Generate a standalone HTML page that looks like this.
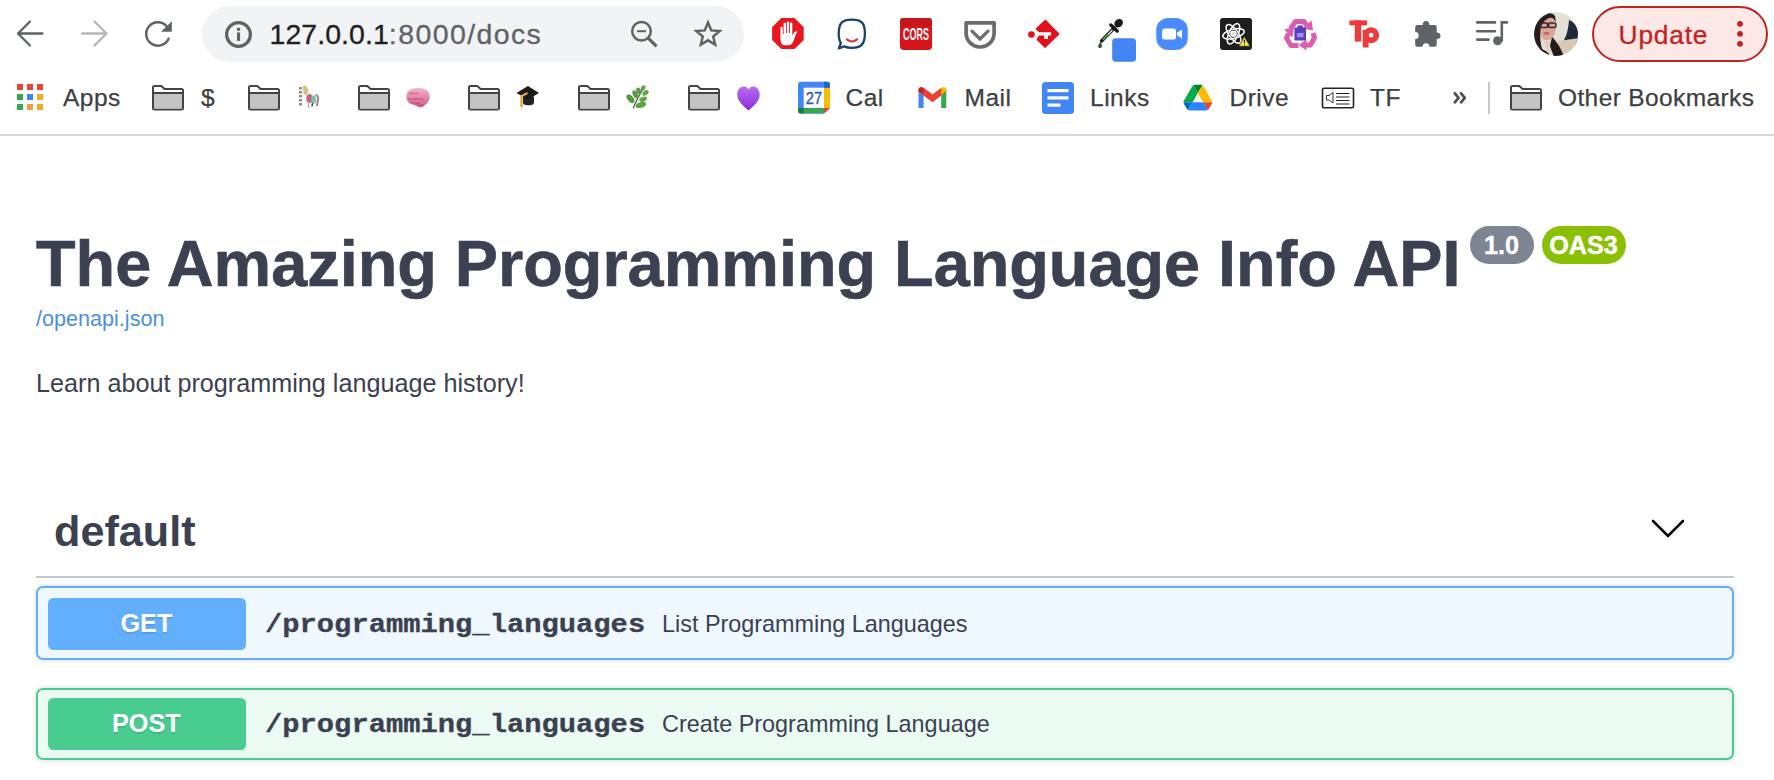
<!DOCTYPE html>
<html>
<head>
<meta charset="utf-8">
<style>
html,body{margin:0;padding:0;}
body{width:1774px;height:780px;overflow:hidden;background:#fff;position:relative;font-family:"Liberation Sans",sans-serif;}
.a{position:absolute;white-space:nowrap;line-height:1;}
svg.a{overflow:visible;}
.bm{font-size:24.5px;color:#3c4043;letter-spacing:0.5px;-webkit-text-stroke:0.25px #3c4043}
</style>
</head>
<body>
<!-- ===== Browser toolbar ===== -->
<svg class="a" style="left:0;top:0" width="1774" height="136" viewBox="0 0 1774 136">
  <!-- back -->
  <g fill="none" stroke="#5f6368" stroke-width="2.3" stroke-linecap="round" stroke-linejoin="round">
    <path d="M42.5 33.5H18M30 21.5L18 33.5L30 45.5"/>
  </g>
  <!-- forward -->
  <g fill="none" stroke="#b4b6b9" stroke-width="2.3" stroke-linecap="round" stroke-linejoin="round">
    <path d="M82 33.5H106.5M94.5 21.5L106.5 33.5L94.5 45.5"/>
  </g>
  <!-- reload -->
  <path d="M166.5 26 A11.7 11.7 0 1 0 168.6 38.7" fill="none" stroke="#5f6368" stroke-width="2.5" stroke-linecap="round"/>
  <path d="M161 31.7H171.8V21.2Z" fill="#5f6368"/>
  <!-- omnibox -->
  <rect x="202" y="6" width="542" height="56" rx="28" fill="#f1f3f4"/>
  <!-- info -->
  <circle cx="238.5" cy="34.5" r="11.9" fill="none" stroke="#5f6368" stroke-width="3.2"/>
  <rect x="237" y="27.8" width="3.1" height="3" fill="#5f6368"/>
  <rect x="237" y="32.5" width="3.1" height="8.4" fill="#5f6368"/>
  <!-- zoom out -->
  <circle cx="641.5" cy="31.2" r="9.3" fill="none" stroke="#5f6368" stroke-width="2.5"/>
  <path d="M637 31.2H646" stroke="#5f6368" stroke-width="2"/>
  <path d="M648.5 38.3L656.5 46.3" stroke="#5f6368" stroke-width="3.2"/>
  <!-- star -->
  <path d="M708 22.5L711.6 31.2L721 31.9L713.8 38L716 47.1L708 42.2L700 47.1L702.2 38L695 31.9L704.4 31.2Z" fill="none" stroke="#5f6368" stroke-width="2.75" stroke-linejoin="miter" transform="translate(708 33.3) scale(0.9) translate(-708 -34.4)"/>

  <!-- ext 1: adblock -->
  <path d="M781.3 18.1H794.5L803.7 27.3V39.9L794.5 49.1H781.3L772.1 39.9V27.3Z" fill="#e8161e"/>
  <path d="M784.5 45.2C781.8 45.2 780.4 42 780.4 38.5V27.5C780.4 26.6 782.7 26.6 782.7 27.5V34H783.6V23.6C783.6 22.6 785.9 22.6 785.9 23.6V33H786.8V22.1C786.8 21.2 789.1 21.2 789.1 22.1V33H790V23.2C790 22.3 792.3 22.3 792.3 23.2V35.5C793.5 33 795.3 31 797.3 31.4C795.8 34 794.6 38 793.5 41C792.4 44 790.5 45.2 788.5 45.2Z" fill="#fff"/>
  <!-- ext 2: chat bubble -->
  <path d="M851.8 19.6C861 19.6 864.9 22.5 864.9 33.5C864.9 44.8 860.5 47.9 851.8 47.9C848.5 47.9 846.2 47.4 844.2 46.4L838.8 48.3L840.9 43.2C839.2 40.6 838.7 37.5 838.7 33.5C838.7 22.5 842.8 19.6 851.8 19.6Z" fill="none" stroke="#1d426d" stroke-width="2.3" stroke-linejoin="round"/>
  <path d="M846.8 39.4Q852 43.5 857.2 39.4" fill="none" stroke="#d7373f" stroke-width="2" stroke-linecap="round"/>
  <!-- ext 3: CORS -->
  <rect x="900" y="18" width="32" height="32" rx="4" fill="#d8141b"/>
  <rect x="900" y="18" width="32" height="8" rx="3" fill="#c5161c"/>
  <text x="916" y="39.6" text-anchor="middle" font-family="Liberation Sans" font-weight="bold" font-size="16.5" fill="#fff" textLength="26" lengthAdjust="spacingAndGlyphs">CORS</text>
  <!-- ext 4: pocket -->
  <path d="M966.1 22.8H994.1V33A14 14 0 0 1 966.1 33Z" fill="none" stroke="#6b6b6b" stroke-width="3.7" stroke-linejoin="round"/>
  <path d="M972 31.2L980 39L988 31.2" fill="none" stroke="#6b6b6b" stroke-width="3.2" stroke-linecap="round" stroke-linejoin="round"/>
  <!-- ext 5: red diamond key -->
  <path d="M1045.5 20.3L1058.8 34L1045 47.3L1037.2 39.6L1039.2 36H1043.7V39.6H1048.6V36H1051.7V31.7H1039.2L1036.3 28.8Z" fill="#e3111b" stroke="#e3111b" stroke-width="1.2" stroke-linejoin="round"/>
  <circle cx="1031.4" cy="34.5" r="3.3" fill="#e3111b"/>
  <!-- ext 6: eyedropper + blue square -->
  <rect x="1112.2" y="38.2" width="23.8" height="23.6" rx="3.5" fill="#4385f2"/>
  <path d="M1114 28.3L1101.5 41" stroke="#1f2a1f" stroke-width="3.6" stroke-linecap="round"/>
  <path d="M1112.3 30.2L1103 39.6" stroke="#e4ece4" stroke-width="1.3"/>
  <path d="M1108.2 34.4L1103 39.6" stroke="#4f9a3a" stroke-width="1.5"/>
  <path d="M1110.8 25L1117.2 31" stroke="#111" stroke-width="3.3" stroke-linecap="round"/>
  <ellipse cx="1118.6" cy="23.2" rx="4.7" ry="3.9" transform="rotate(-45 1118.6 23.2)" fill="#1a1a1a"/>
  <path d="M1100.4 42.2C1099 44 1097.8 45.5 1098.3 47C1098.8 48.4 1101.2 48.4 1101.8 47C1102.2 45.5 1101.5 43.5 1100.4 42.2Z" fill="#344d36"/>
  <!-- ext 7: zoom -->
  <rect x="1156.2" y="18" width="31.6" height="32" rx="12" fill="#4a8cff"/>
  <rect x="1162.1" y="28.4" width="13.9" height="11.2" rx="2.5" fill="#fff"/>
  <path d="M1177 32.8L1182 29.5V38.6L1177 35.3Z" fill="#fff"/>
  <!-- ext 8: react -->
  <rect x="1220" y="18" width="32" height="32" rx="3" fill="#1e1e1e"/>
  <g fill="none" stroke="#fff" stroke-width="1.5">
    <ellipse cx="1233.5" cy="33.8" rx="11" ry="4.6" transform="rotate(-15 1233.5 33.8)"/>
    <ellipse cx="1233.5" cy="33.8" rx="11" ry="4.6" transform="rotate(55 1233.5 33.8)"/>
    <ellipse cx="1233.5" cy="33.8" rx="11" ry="4.6" transform="rotate(115 1233.5 33.8)"/>
  </g>
  <circle cx="1233.5" cy="33.8" r="2.6" fill="#ddd" stroke="#fff" stroke-width="1.4"/>
  <path d="M1244.4 36.5L1250 46.3H1238.8Z" fill="#f4e64a" stroke="#1e1e1e" stroke-width="0.6"/>
  <path d="M1244.4 39.8V43.3M1244.4 44.3V45.2" stroke="#1e1e1e" stroke-width="1.1"/>
  <!-- ext 9: recycle -->
  <g fill="none" stroke="#dc5db0" stroke-width="5" stroke-linejoin="round">
    <path d="M1290.5 29L1295.5 21.5H1304L1306.5 25.5"/>
    <path d="M1313 33L1314.5 37.5L1310.5 45H1305"/>
    <path d="M1298.5 45.5H1291L1286.5 38L1288.5 33.5"/>
  </g>
  <g fill="#dc5db0">
    <path d="M1302.5 28.5L1313 30.5L1311.5 20.5Z"/>
    <path d="M1306.5 39.5V50.5L1298.5 45Z"/>
    <path d="M1284 29.5L1294 27.5L1292.5 37.5Z"/>
  </g>
  <rect x="1294.4" y="27.5" width="11.6" height="13" rx="1" fill="#5b3ec2"/>
  <rect x="1297.5" y="25.5" width="5.4" height="2.5" fill="#5b3ec2"/>
  <rect x="1297" y="33" width="6.5" height="4.2" fill="#a58be8"/>
  <!-- ext 10: Tp -->
  <rect x="1349.4" y="20.4" width="17.7" height="5" fill="#ee3a3d"/>
  <rect x="1354.8" y="20.4" width="6.4" height="21.2" fill="#ee3a3d"/>
  <circle cx="1371.1" cy="35.2" r="5.2" fill="none" stroke="#ee3a3d" stroke-width="5.6"/>
  <rect x="1362.7" y="30" width="5.9" height="17.5" fill="#ee3a3d"/>
  <!-- ext 11: puzzle -->
  <path d="M1417.2 25H1422.8A3.3 3.3 0 1 1 1429.2 25H1434.7Q1436.7 25 1436.7 27V32.5A3.3 3.3 0 1 1 1436.7 39V44.8Q1436.7 46.8 1434.7 46.8H1429.5A3.5 3.5 0 0 0 1422.5 46.8H1417.2Q1415.2 46.8 1415.2 44.8V39A3.5 3.5 0 0 0 1415.2 32V27Q1415.2 25 1417.2 25Z" fill="#5f6368"/>
  <!-- ext 12: media queue -->
  <g stroke="#5f6368" stroke-width="2.6" stroke-linecap="round">
    <path d="M1477.2 22.4H1495M1477.2 31.2H1495M1477.2 39.6H1488.5"/>
    <path d="M1501.8 40.5V22.4H1507" fill="none"/>
  </g>
  <circle cx="1497.6" cy="40.8" r="4.5" fill="#5f6368"/>
  <!-- avatar -->
  <defs>
    <clipPath id="av"><circle cx="1556" cy="34" r="22"/></clipPath>
  </defs>
  <g clip-path="url(#av)">
    <rect x="1534" y="12" width="45" height="45" fill="#e3e1d6"/>
    <path d="M1569 20C1575 22 1579 30 1579 38V45L1560 44C1565 41 1568 33 1569 20Z" fill="#1f2738"/>
    <path d="M1558 41L1579 38V50L1566 56L1556 50Z" fill="#d9c8b6"/>
    <ellipse cx="1547.5" cy="28.8" rx="8.3" ry="11.5" transform="rotate(6 1547.5 28.8)" fill="#d8a999"/>
    <path d="M1534 57V34C1534 22 1540 13.5 1548 13.2C1552 13 1555 14.5 1555.5 17.5C1549 16.5 1542 20 1540.5 30C1539.5 40 1541 50 1546 57Z" fill="#2a1c1b"/>
    <path d="M1548 13.5C1553 14 1556 17 1556 22L1553 18.5C1551 17.5 1548.5 17 1546 17.5Z" fill="#2a1c1b"/>
    <rect x="1540.5" y="23" width="7" height="4.4" rx="1" fill="none" stroke="#3a2730" stroke-width="1.5"/>
    <rect x="1548.8" y="23" width="7" height="4.4" rx="1" fill="none" stroke="#3a2730" stroke-width="1.5"/>
    <ellipse cx="1546.5" cy="33.4" rx="3.2" ry="1.4" fill="#c5646c"/>
    <path d="M1543 40C1547 42 1551 41 1554 38L1557 50L1548 53Z" fill="#e4d0c3"/>
    <path d="M1552 37C1557 42 1561 48 1564 57H1554L1550 46Z" fill="#231a1a"/>
    <path d="M1538 50C1542 48 1547 50 1551 57H1534Z" fill="#1f1818"/>
  </g>
  <!-- update button -->
  <rect x="1593" y="7" width="174" height="54" rx="27" fill="#fce8e6" stroke="#c5221f" stroke-width="2"/>
  <circle cx="1740" cy="23.8" r="2.9" fill="#c5221f"/>
  <circle cx="1740" cy="33.8" r="2.9" fill="#c5221f"/>
  <circle cx="1740" cy="43.8" r="2.9" fill="#c5221f"/>

  <!-- ===== Bookmarks bar ===== -->
  <!-- apps grid -->
  <g>
    <rect x="17" y="84" width="6" height="6" fill="#ea4335"/><rect x="27" y="84" width="6" height="6" fill="#ea4335"/><rect x="37" y="84" width="6" height="6" fill="#ea4335"/>
    <rect x="17" y="94" width="6" height="6" fill="#34a853"/><rect x="27" y="94" width="6" height="6" fill="#4285f4"/><rect x="37" y="94" width="6" height="6" fill="#f9a825"/>
    <rect x="17" y="104" width="6" height="6" fill="#34a853"/><rect x="27" y="104" width="6" height="6" fill="#f29e3b"/><rect x="37" y="104" width="6" height="6" fill="#f9a825"/>
  </g>
  <defs>
    <g id="fold">
      <path d="M1 2.5Q1 1 2.5 1H9.3L12.6 4H29.5Q31 4 31 5.5V23Q31 24.5 29.5 24.5H2.5Q1 24.5 1 23Z" fill="#fff" stroke="#444" stroke-width="2" stroke-linejoin="round"/>
      <rect x="2" y="9" width="28" height="14.5" fill="#c4c4c4"/>
      <path d="M1 8H31" stroke="#444" stroke-width="2"/>
    </g>
  </defs>
  <use href="#fold" x="152" y="85"/>
  <use href="#fold" x="248" y="85"/>
  <use href="#fold" x="358" y="85"/>
  <use href="#fold" x="468" y="85"/>
  <use href="#fold" x="578" y="85"/>
  <use href="#fold" x="688" y="85"/>
  <use href="#fold" x="1510" y="85"/>
  <!-- carousel horse emoji approx -->
  <g>
    <path d="M300.5 87V106" stroke="#7a6a5c" stroke-width="3.2" stroke-dasharray="2.5 1.5" opacity="0.75"/>
    <path d="M303 86L306 85.5L308.5 90L307 95L303.5 94Z" fill="#c9b766" opacity="0.85"/>
    <ellipse cx="309.5" cy="98.5" rx="3.2" ry="4.6" fill="#d45f7c"/>
    <ellipse cx="313.6" cy="99.5" rx="2.4" ry="4.2" fill="#73c6b2"/>
    <path d="M315.5 94.5C318.5 95.5 318.5 99 317.5 101.5L317 106" fill="none" stroke="#8f6f66" stroke-width="2.2" opacity="0.8"/>
    <path d="M308.5 101V108" stroke="#b3a39a" stroke-width="1.2"/>
    <path d="M312.5 103L312 106.5" stroke="#3a4a40" stroke-width="1.6"/>
  </g>
  <!-- brain -->
  <defs><linearGradient id="brg" x1="0" y1="0" x2="0" y2="1"><stop offset="0" stop-color="#f2b3c8"/><stop offset="1" stop-color="#d55c86"/></linearGradient></defs>
  <g>
    <path d="M406.5 97C406 91 411 88 418 88C425 88 430 91 429.8 97C429.5 101 427 104 424 105.5C423 107.5 420 108 417.5 106.5C415 105.5 413 104.5 411 104C408 103 406.5 100 406.5 97Z" fill="url(#brg)"/>
    <path d="M407.5 99C410 98 412 100 415 99C418 98 421 100 424 99M411 103C414 102 417 104 420 103M419 104.5C421 106 423 105 425 104M409 94C412 92.5 415 94 418 93" fill="none" stroke="#a8405f" stroke-width="0.9" opacity="0.8"/>
  </g>
  <!-- graduation cap -->
  <g>
    <path d="M523 96.5H534V102.5C534 104.5 531 105.3 528.5 105.3C526 105.3 523 104.5 523 102.5Z" fill="#222"/>
    <path d="M516.5 93L528 86.1L539 93.1L528 99.6Z" fill="#1a1a1a"/>
    <path d="M527.5 93L521.5 96V107" fill="none" stroke="#e0a52e" stroke-width="2.2" stroke-linejoin="round"/>
    <path d="M520 104.5L521.5 109L523.2 104.5Z" fill="#e8b23a"/>
  </g>
  <!-- herb -->
  <g>
    <path d="M633.1 108.3C636 101 640 94 644.4 86.1" fill="none" stroke="#3f6b34" stroke-width="1.2"/>
    <ellipse cx="630.5" cy="98.7" rx="5" ry="2.9" transform="rotate(50 630.5 98.7)" fill="#4f9a3a"/>
    <ellipse cx="640.9" cy="105" rx="5.5" ry="2.8" transform="rotate(-15 640.9 105)" fill="#5aa340"/>
    <ellipse cx="635.5" cy="94.4" rx="4.5" ry="2.5" transform="rotate(60 635.5 94.4)" fill="#5b9a48"/>
    <ellipse cx="643.1" cy="99.2" rx="4" ry="2.4" transform="rotate(-20 643.1 99.2)" fill="#5fa845"/>
    <ellipse cx="638.7" cy="90.9" rx="3.5" ry="2.2" transform="rotate(65 638.7 90.9)" fill="#5b9a48"/>
    <ellipse cx="645.5" cy="92.9" rx="3.5" ry="2.2" transform="rotate(-35 645.5 92.9)" fill="#5fa845"/>
    <ellipse cx="643.1" cy="88.1" rx="3" ry="2" transform="rotate(-60 643.1 88.1)" fill="#6a9a58"/>
  </g>
  <!-- purple heart -->
  <defs><linearGradient id="hg" x1="0" y1="0" x2="0" y2="1"><stop offset="0" stop-color="#b76cf0"/><stop offset="1" stop-color="#8b2fd9"/></linearGradient></defs>
  <path d="M748.5 110.5C744 106.5 737.3 101.5 737.3 94.5C737.3 89.5 740.5 86.5 743.7 86.5C746 86.5 747.6 87.8 748.5 89.5C749.4 87.8 751 86.5 753.3 86.5C756.5 86.5 759.7 89.5 759.7 94.5C759.7 101.5 753 106.5 748.5 110.5Z" fill="url(#hg)"/>
  <!-- calendar -->
  <g>
    <path d="M801 81.8H827Q830 81.8 830 84.8V108L824 113.6H801Q798 113.6 798 110.6V84.8Q798 81.8 801 81.8Z" fill="#4285f4"/>
    <rect x="803.7" y="87.7" width="20.3" height="20.3" fill="#fff"/>
    <path d="M824 87.7H830V108H824Z" fill="#fbbc04"/>
    <path d="M798 108H824V113.6H801Q798 113.6 798 110.6Z" fill="#34a853"/>
    <path d="M824 108H830L824 113.6Z" fill="#ea4335"/>
    <path d="M824 81.8H827Q830 81.8 830 84.8V87.7H824Z" fill="#1967d2"/>
    <path d="M798 108H803.7V113.6H801Q798 113.6 798 110.6Z" fill="#188038"/>
    <text x="805.8" y="103.6" font-family="Liberation Sans" font-size="16.5" fill="#2f5fb8" stroke="#2f5fb8" stroke-width="0.4" textLength="16.2" lengthAdjust="spacingAndGlyphs">27</text>
  </g>
  <!-- gmail -->
  <g>
    <path d="M918.5 89.5V108H923.6V95.5Z" fill="#4285f4"/>
    <path d="M941.2 95.5V108H946.3V89.5Z" fill="#34a853"/>
    <path d="M918.5 89.5L932.4 100L946.3 89.5V91.5L932.4 102L918.5 91.5Z" fill="#ea4335"/>
    <path d="M918.5 90C918.5 87 921.5 86.2 923.6 88L932.4 94.5V101L918.5 91Z" fill="#c5221f"/>
    <path d="M946.3 90C946.3 87 943.3 86.2 941.2 88L932.4 94.5V101L946.3 91Z" fill="#fbbc04"/>
    <path d="M923.6 88L932.4 94.5L941.2 88L941.2 95.5L932.4 102L923.6 95.5Z" fill="#ea4335"/>
  </g>
  <!-- docs/links -->
  <g>
    <rect x="1042" y="82" width="32" height="32" rx="3.5" fill="#4285f4"/>
    <rect x="1047.5" y="89" width="21" height="3.2" fill="#fff"/>
    <rect x="1047.5" y="96.3" width="21" height="3.2" fill="#fff"/>
    <rect x="1047.5" y="103.5" width="13" height="3.2" fill="#fff"/>
  </g>
  <!-- drive -->
  <g transform="translate(1183.5 84.8) scale(0.329)">
    <path d="m6.6 66.85 3.85 6.65c.8 1.4 1.95 2.5 3.3 3.3l13.75-23.8h-27.5c0 1.55.4 3.1 1.2 4.5z" fill="#0066da"/>
    <path d="m43.65 25-13.75-23.8c-1.35.8-2.5 1.9-3.3 3.3l-25.4 44a9.06 9.06 0 0 0 -1.2 4.5h27.5z" fill="#00ac47"/>
    <path d="m73.55 76.8c1.35-.8 2.5-1.9 3.3-3.3l1.6-2.75 7.65-13.25c.8-1.4 1.2-2.950 1.2-4.5h-27.502l5.852 11.5z" fill="#ea4335"/>
    <path d="m43.65 25 13.75-23.8c-1.35-.8-2.9-1.2-4.5-1.2h-18.5c-1.6 0-3.15.45-4.5 1.2z" fill="#00832d"/>
    <path d="m59.8 53h-32.3l-13.75 23.8c1.35.8 2.9 1.2 4.5 1.2h50.8c1.6 0 3.15-.45 4.5-1.2z" fill="#2684fc"/>
    <path d="m73.4 26.5-12.7-22c-.8-1.4-1.95-2.5-3.3-3.3l-13.75 23.8 16.15 28h27.45c0-1.55-.4-3.1-1.2-4.5z" fill="#ffba00"/>
  </g>
  <!-- TF icon -->
  <g>
    <rect x="1322.5" y="88.2" width="31" height="19.5" rx="1.5" fill="#fff" stroke="#222" stroke-width="1.6"/>
    <path d="M1326.5 95.5H1329L1333 92.5V103L1329 100H1326.5Z" fill="none" stroke="#333" stroke-width="1"/>
    <path d="M1336 93.5H1349.5M1336 97H1349.5M1336 100.5H1349.5M1336 104H1349.5" stroke="#222" stroke-width="1.2"/>
  </g>
  <!-- chevrons -->
  <path d="M1454.8 93.3L1458.6 97.8L1454.8 102.3M1461 93.3L1464.8 97.8L1461 102.3" fill="none" stroke="#4d5156" stroke-width="2.8" stroke-linecap="round" stroke-linejoin="round"/>
  <!-- separator -->
  <rect x="1488" y="82" width="2" height="32" fill="#c7c7c7"/>
  <!-- bottom border -->
  <rect x="0" y="134" width="1774" height="2" fill="#d8d8d8"/>
</svg>

<!-- toolbar text -->
<div class="a" style="left:269.5px;top:20px;font-size:28.5px;color:#202124;letter-spacing:0.05px;-webkit-text-stroke:0.3px #202124">127.0.0.1<span style="color:#5f6368;letter-spacing:1.4px;-webkit-text-stroke:0.3px #5f6368">:8000/docs</span></div>
<div class="a" style="left:1618.6px;top:21.5px;font-size:26.3px;color:#c5221f;letter-spacing:0.8px;-webkit-text-stroke:0.3px #c5221f">Update</div>

<div class="a bm" style="left:63px;top:85.8px">Apps</div>
<div class="a bm" style="left:201px;top:85.8px">$</div>
<div class="a bm" style="left:845.5px;top:85.8px">Cal</div>
<div class="a bm" style="left:964.5px;top:85.8px">Mail</div>
<div class="a bm" style="left:1090px;top:85.8px">Links</div>
<div class="a bm" style="left:1229.5px;top:85.8px">Drive</div>
<div class="a bm" style="left:1370px;top:85.8px">TF</div>
<div class="a bm" style="left:1558px;top:85.8px;letter-spacing:0.38px">Other Bookmarks</div>

<!-- ===== Swagger content ===== -->
<div class="a" style="left:36px;top:231.5px;font-size:64.8px;font-weight:bold;color:#3b4151;-webkit-text-stroke:0.6px #3b4151">The Amazing Programming Language Info API</div>
<div class="a" style="left:1470px;top:226px;width:64px;height:37.6px;border-radius:19px;background:#7d8492"></div>
<div class="a" style="left:1542px;top:226px;width:84px;height:37.6px;border-radius:19px;background:#89bf04"></div>
<div class="a" style="left:1484px;top:233px;font-size:25.2px;font-weight:bold;color:#fff;-webkit-text-stroke:0.4px #fff">1.0</div>
<div class="a" style="left:1549.2px;top:233px;font-size:25.2px;font-weight:bold;color:#fff;-webkit-text-stroke:0.4px #fff">OAS3</div>

<div class="a" style="left:36px;top:308px;font-size:21.6px;color:#4990e2">/openapi.json</div>
<div class="a" style="left:36px;top:371px;font-size:25.2px;color:#3b4151">Learn about programming language history!</div>

<div class="a" style="left:54px;top:510px;font-size:43.2px;font-weight:bold;color:#3b4151">default</div>
<svg class="a" style="left:0;top:480px" width="1774" height="100">
  <path d="M1653 41L1668 56L1683 41" fill="none" stroke="#000" stroke-width="2.6" stroke-linecap="round"/>
</svg>
<div class="a" style="left:36px;top:576px;width:1698px;height:2px;background:rgba(59,65,81,.3)"></div>

<!-- GET -->
<div class="a" style="left:36px;top:586px;width:1694px;height:70px;border:2px solid #61affe;border-radius:7px;background:rgba(97,175,254,.1);box-shadow:0 0 5.4px rgba(0,0,0,.19)"></div>
<div class="a" style="left:48px;top:598px;width:198px;height:51.5px;border-radius:5.4px;background:#61affe"></div>
<div class="a" style="left:120.5px;top:610.5px;font-size:25.2px;font-weight:bold;color:#fff;text-shadow:0 1.8px 0 rgba(0,0,0,.1)">GET</div>
<div class="a" style="left:265px;top:611.4px;font-family:'Liberation Mono',monospace;font-size:28.8px;transform:scaleY(0.88);transform-origin:0 22.07px;-webkit-text-stroke:0.35px #3b4151;font-weight:bold;color:#3b4151">/programming_languages</div>
<div class="a" style="left:662px;top:613px;font-size:23.4px;color:#3b4151">List Programming Languages</div>

<!-- POST -->
<div class="a" style="left:36px;top:688px;width:1694px;height:68px;border:2px solid #49cc90;border-radius:7px;background:rgba(73,204,144,.1);box-shadow:0 0 5.4px rgba(0,0,0,.19)"></div>
<div class="a" style="left:48px;top:698px;width:198px;height:51.5px;border-radius:5.4px;background:#49cc90"></div>
<div class="a" style="left:112px;top:711px;font-size:25.2px;font-weight:bold;color:#fff;text-shadow:0 1.8px 0 rgba(0,0,0,.1)">POST</div>
<div class="a" style="left:265px;top:711.4px;font-family:'Liberation Mono',monospace;font-size:28.8px;transform:scaleY(0.88);transform-origin:0 22.07px;-webkit-text-stroke:0.35px #3b4151;font-weight:bold;color:#3b4151">/programming_languages</div>
<div class="a" style="left:662px;top:713px;font-size:23.4px;color:#3b4151">Create Programming Language</div>
</body>
</html>
